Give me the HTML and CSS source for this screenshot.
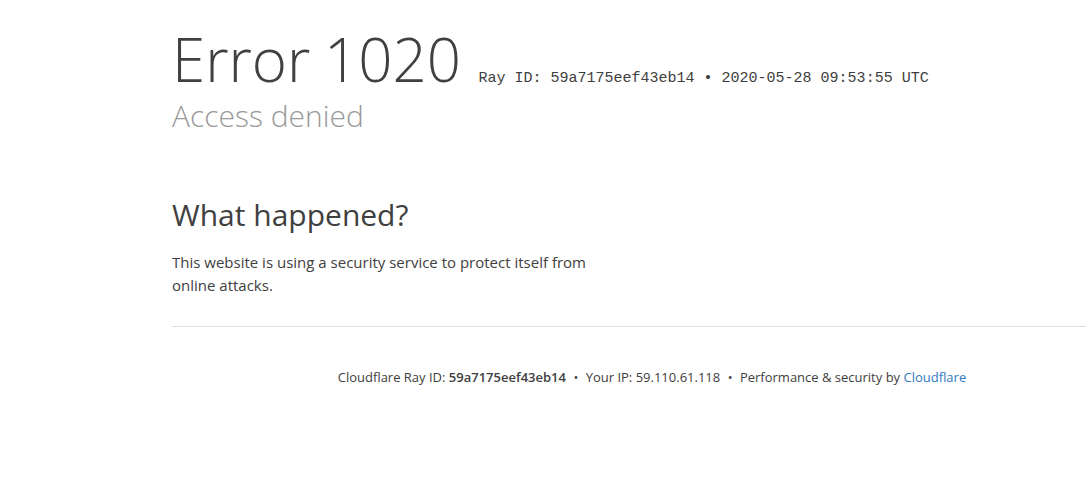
FILE: index.html
```html
<!DOCTYPE html>
<html lang="en">
<head>
<meta charset="utf-8">
<title>Access denied | Cloudflare</title>
<link rel="stylesheet" href="styles.css">
</head>
<body>
<div class="page">
  <header class="header">
    <h1 class="title">
      <span class="error-type">Error</span>
      <span class="error-code">1020</span>
      <small class="ray-heading">Ray ID: 59a7175eef43eb14 &bull; 2020-05-28 09:53:55 UTC</small>
    </h1>
    <h2 class="subheadline">Access denied</h2>
  </header>
  <section class="section">
    <div class="column">
      <h2 class="column-title">What happened?</h2>
      <p class="column-text">This website is using a security service to protect itself from online attacks.</p>
    </div>
  </section>
  <footer class="footer">
    <p class="footer-text">
      <span>Cloudflare Ray ID: <strong>59a7175eef43eb14</strong></span>
      <span class="sep">&bull;</span>
      <span>Your IP: 59.110.61.118</span>
      <span class="sep">&bull;</span>
      <span>Performance &amp; security by <a class="link" href="#">Cloudflare</a></span>
    </p>
  </footer>
</div>
</body>
</html>
```
FILE: styles.css
```css
html, body {
  margin: 0;
  padding: 0;
  background: #fff;
  overflow: hidden;
}
body {
  font-family: "Open Sans", "Liberation Sans", sans-serif;
  color: #404040;
  width: 1086px;
}
.page {
  width: 960px;
  margin-left: 172px;
}
.header {
  padding-top: 19px;
}
.title {
  margin: 0;
  font-size: 60px;
  font-weight: 300;
  line-height: 80px;
  color: #404040;
  white-space: nowrap;
}
.error-code {
  margin-left: -2px;
}
.ray-heading {
  font-family: "Liberation Mono", "Courier New", monospace;
  font-size: 15px;
  font-weight: 400;
  color: #404040;
  margin-left: 2px;
  vertical-align: baseline;
}
.subheadline {
  margin: -23px 0 0;
  font-size: 30px;
  font-weight: 300;
  line-height: 40px;
  color: #999;
}
.section {
  padding-top: 59px;
}
.column {
  width: 450px;
}
.column-title {
  margin: 0;
  font-size: 30px;
  font-weight: 400;
  line-height: 40px;
  color: #404040;
}
.column-text {
  margin: 16px 0 0;
  font-size: 15px;
  line-height: 23px;
}
.footer {
  margin-top: 29px;
  border-top: 1px solid #dedede;
  padding-top: 40px;
}
.footer-text {
  margin: 0;
  text-align: center;
  font-size: 13px;
  line-height: 20px;
}
.footer-text strong {
  font-weight: 600;
}
.sep {
  margin: 0 4px;
}
.link {
  color: #2f7bbf;
  text-decoration: none;
}
```
